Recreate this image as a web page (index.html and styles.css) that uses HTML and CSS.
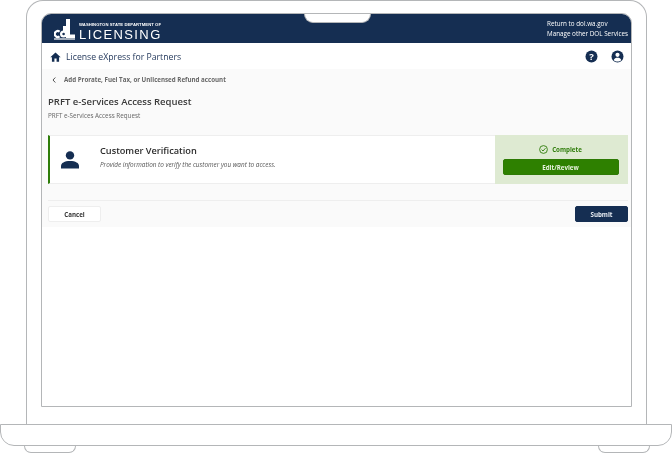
FILE: index.html
```html
<!DOCTYPE html>
<html lang="en">
<head>
<meta charset="utf-8">
<title>PRFT e-Services Access Request</title>
<link rel="stylesheet" href="styles.css">
</head>
<body>
<div class="device">
  <div class="lid">
    <div class="screen">
      <div class="notch"></div>
      <header class="topbar">
        <div class="brand">
          <svg class="logo" width="21" height="21" viewBox="0 0 21 21">
            <rect x="9" y="7" width="4" height="6" fill="#fff"/>
            <rect x="12" y="0" width="4" height="19" fill="#fff"/>
            <rect x="12" y="15.5" width="9" height="3.5" fill="#fff"/>
            <path d="M5.6 12.6A3 3 0 1 0 5.6 17.4" fill="none" stroke="#fff" stroke-width="2.2"/>
            <circle cx="9.6" cy="15" r="3.6" fill="#fff"/>
            <circle cx="9.6" cy="15" r="1.3" fill="#152e52"/>
            <rect x="0" y="19.4" width="21" height="1.2" fill="#fff"/>
          </svg>
          <div class="brand-text">
            <span class="brand-small">WASHINGTON STATE DEPARTMENT OF</span>
            <span class="brand-large">LICENSING</span>
          </div>
        </div>
        <nav class="toplinks">
          <a>Return to dol.wa.gov</a>
          <a>Manage other DOL Services</a>
        </nav>
      </header>
      <div class="appbar">
        <div class="app-title">
          <svg width="11" height="10" viewBox="0 0 13 12"><path d="M6.5 0.5 0.3 6.2H2.2V11.7H5.2V7.8H7.8V11.7H10.8V6.2H12.7Z" fill="#152e52"/></svg>
          <span>License eXpress for Partners</span>
        </div>
        <div class="app-icons">
          <svg width="13" height="13" viewBox="0 0 13 13"><circle cx="6.5" cy="6.5" r="6" fill="#152e52"/><text x="6.5" y="10" text-anchor="middle" class="q">?</text></svg>
          <svg width="13" height="13" viewBox="0 0 13 13"><circle cx="6.5" cy="6.5" r="6" fill="#152e52"/><circle cx="6.5" cy="4.8" r="2.1" fill="#fff"/><path d="M2.7 10.2C3.3 8.4 4.8 7.8 6.5 7.8S9.7 8.4 10.3 10.2C9.3 11.1 8 11.6 6.5 11.6S3.7 11.1 2.7 10.2Z" fill="#fff"/></svg>
        </div>
      </div>
      <main class="content">
        <div class="backlink">
          <svg width="4" height="6" viewBox="0 0 4 6"><path d="M3.3 .5 1 3 3.3 5.5" fill="none" stroke="#555" stroke-width="1"/></svg>
          <span>Add Prorate, Fuel Tax, or Unlicensed Refund account</span>
        </div>
        <h1>PRFT e-Services Access Request</h1>
        <p class="subtitle">PRFT e-Services Access Request</p>
        <section class="card">
          <div class="card-icon">
            <svg width="18" height="18" viewBox="0 0 18 18"><circle cx="9" cy="4.4" r="4.2" fill="#152e52"/><path d="M0 17.5V15C0 12 3.5 10 9 10S18 12 18 15V17.5Z" fill="#152e52"/></svg>
          </div>
          <div class="card-body">
            <h2>Customer Verification</h2>
            <p>Provide information to verify the customer you want to access.</p>
          </div>
          <div class="card-status">
            <div class="status-label">
              <svg width="9" height="9" viewBox="0 0 9 9"><circle cx="4.5" cy="4.5" r="3.9" fill="none" stroke="#2f7d0a" stroke-width=".9"/><path d="M2.6 4.6 4 6 6.5 3.2" fill="none" stroke="#2f7d0a" stroke-width=".9"/></svg>
              <span>Complete</span>
            </div>
            <button class="btn btn-green">Edit/Review</button>
          </div>
        </section>
        <div class="actions">
          <button class="btn btn-light">Cancel</button>
          <button class="btn btn-navy">Submit</button>
        </div>
      </main>
    </div>
  </div>
  <div class="base"></div>
  <div class="feet"><div class="foot"></div><div class="foot"></div></div>
</div>
</body>
</html>
```
FILE: styles.css
```css
* { box-sizing: border-box; }
html, body { margin: 0; padding: 0; background: #fff; }
body { font-family: "Open Sans", "Noto Sans", sans-serif; color: #333; width: 672px; height: 454px; overflow: hidden; }
.device { width: 672px; height: 454px; display: flex; flex-direction: column; filter: blur(0.35px); }
.lid { margin: 0 25px 0 26px; height: 424px; padding: 12px 14px 17px; border: 1.3px solid #b4b6b8; border-bottom: 0; border-radius: 17px 17px 0 0; }
.screen { position: relative; height: 394px; border: 1.3px solid #b4b6b8; border-radius: 10px 10px 0 0; background: #fff; overflow: hidden; }
.notch { position: absolute; top: -1px; left: 262px; width: 67px; height: 10px; background: #fff; border: 1px solid #b4b6b8; border-top: 0; border-radius: 0 0 9px 9px; }
.topbar { height: 29px; background: #152e52; color: #fff; display: flex; justify-content: space-between; align-items: center; padding: 0 3px 0 12px; }
.brand { display: flex; align-items: flex-end; gap: 4px; }
.logo { display: block; margin-top: 1px; }
.brand-text { display: flex; flex-direction: column; }
.brand-small { font-family: "Liberation Sans", sans-serif; font-size: 4.2px; font-weight: 700; line-height: 6px; letter-spacing: .07px; margin-bottom: 1px; }
.brand-large { font-family: "Liberation Sans", sans-serif; font-size: 13px; line-height: 11px; letter-spacing: 1.4px; }
.toplinks { display: flex; flex-direction: column; font-size: 6.3px; line-height: 10px; }
.appbar { height: 26px; display: flex; justify-content: space-between; align-items: center; padding: 0 7px 0 8px; background: #fff; }
.app-title { display: flex; align-items: center; gap: 5px; padding-top: 1px; font-size: 8.7px; color: #24395c; }
.app-title svg, .app-icons svg { display: block; }
.q { font-family: "Open Sans", sans-serif; font-size: 9.5px; font-weight: 700; fill: #fff; }
.app-icons { display: flex; gap: 13px; }
.content { background: #fafafa; height: 158px; padding: 0 3px 0 6px; }
.backlink { display: flex; align-items: center; gap: 8px; padding: 3px 0 0 4px; height: 18px; font-size: 6.2px; font-weight: 700; color: #666; }
h1 { margin: 8px 0 0; font-size: 9.5px; line-height: 14px; font-weight: 600; color: #3a3a3a; }
.subtitle { margin: 2px 0 0; font-size: 6.3px; line-height: 10px; color: #666; }
.card { display: flex; height: 49px; margin-top: 14px; background: #fff; border-left: 2px solid #2f7d0a; border-bottom: 1px solid #eee; border-top: 1px solid #eee; }
.card-icon { width: 50px; display: flex; align-items: center; justify-content: center; padding: 0 10px 0 0; }
.card-body { flex: 1; padding: 8px 0 0 0; }
h2 { margin: 0; font-size: 9.2px; line-height: 13px; font-weight: 600; color: #2b2b2b; }
.card-body p { margin: 3px 0 0; font-size: 6.4px; line-height: 9px; font-style: italic; color: #555; }
.card-status { width: 133px; background: #deead2; display: flex; flex-direction: column; align-items: center; padding: 9px 2px 0 0; margin: -1px 0; }
.status-label { display: flex; align-items: center; gap: 4px; height: 11px; font-size: 6.2px; font-weight: 700; color: #2f7d0a; }
.status-label svg { display: block; }
.btn { font-family: inherit; font-size: 6.2px; font-weight: 700; border-radius: 2px; padding: 0; display: block; }
.btn-green { width: 116px; height: 16px; margin-top: 4px; background: #2e8000; color: #e8f2de; border: 1px solid #2e7a05; }
.actions { display: flex; justify-content: space-between; align-items: flex-start; margin-top: 16px; padding-top: 5px; height: 26px; border-top: 1px solid #eee; }
.btn-light { width: 53px; height: 16px; background: #fff; color: #333; border: 1px solid #eee; }
.btn-navy { width: 53px; height: 16px; background: #152e52; color: #e8edf3; border: 1px solid #152e52; }
.base { height: 22px; border: 1.3px solid #b4b6b8; border-radius: 0 0 14px 14px; background: #fff; }
.feet { display: flex; justify-content: space-between; padding: 0 22px 0 24px; }
.foot { width: 52px; height: 7px; border: 1.3px solid #b4b6b8; border-top: 0; border-radius: 0 0 10px 10px; }
```
